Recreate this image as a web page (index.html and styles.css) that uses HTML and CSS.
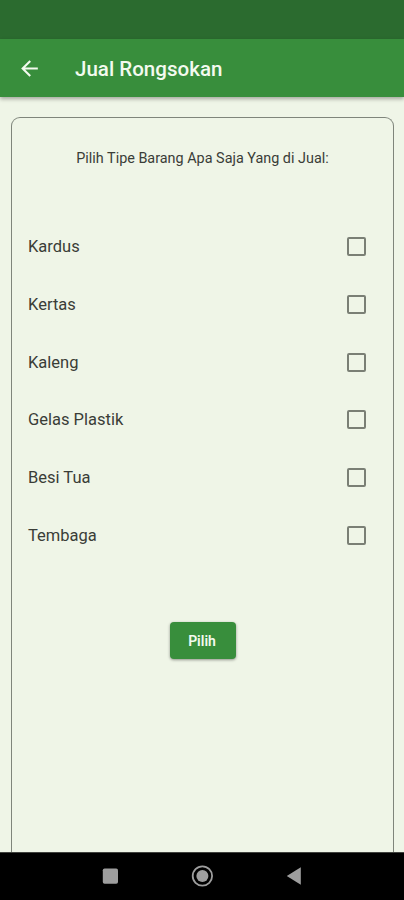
FILE: index.html
```html
<!DOCTYPE html>
<html lang="id">
<head>
<meta charset="utf-8">
<title>Jual Rongsokan</title>
<link rel="stylesheet" href="styles.css">
</head>
<body>
<div class="screen">
  <div class="statusbar"></div>
  <header class="appbar">
    <svg class="back" viewBox="0 0 24 24"><path d="M20 11H7.83l5.59-5.59L12 4l-8 8 8 8 1.41-1.41L7.83 13H20v-2z"/></svg>
    <h1 class="title">Jual Rongsokan</h1>
  </header>
  <main class="content">
    <section class="card">
      <p class="prompt"><span>Pilih Tipe Barang Apa Saja Yang di Jual:</span></p>
      <ul class="list">
        <li class="item"><span>Kardus</span><i class="box"></i></li>
        <li class="item"><span>Kertas</span><i class="box"></i></li>
        <li class="item"><span>Kaleng</span><i class="box"></i></li>
        <li class="item"><span>Gelas Plastik</span><i class="box"></i></li>
        <li class="item"><span>Besi Tua</span><i class="box"></i></li>
        <li class="item"><span>Tembaga</span><i class="box"></i></li>
      </ul>
      <button class="submit">Pilih</button>
    </section>
  </main>
  <nav class="navbar">
    <svg viewBox="0 0 24 24"><rect x="4.8" y="4.5" width="15.2" height="15.2" rx="1.8"/></svg>
    <svg viewBox="0 0 24 24"><circle class="ring" cx="12.4" cy="12" r="9.7"/><circle cx="12.4" cy="12" r="6"/></svg>
    <svg viewBox="0 0 24 24"><path d="M4.8 12 18.8 3.2v17.6z"/></svg>
  </nav>
</div>
</body>
</html>
```
FILE: styles.css
```css
* { box-sizing: border-box; }
body { margin: 0; font-family: Roboto, sans-serif; color: #3a3d37; }
.screen { width: 404px; height: 900px; display: flex; flex-direction: column; background: #eff5e7; overflow: hidden; }
.statusbar { height: 39px; background: #2b6b2f; flex: none; }
.appbar { height: 58px; flex: none; display: flex; align-items: center; padding: 0 17px; background: #388e3c; box-shadow: 0 2px 4px rgba(0,0,0,.32); color: #f3faef; z-index: 1; }
.back { width: 25px; height: 25px; fill: currentColor; flex: none; }
.title { margin: 2px 0 0 33px; font-size: 20.55px; line-height: 26px; font-weight: 500; white-space: nowrap; }
.content { flex: 1; min-height: 0; padding: 20px 10px 0 11px; display: flex; }
.card { flex: 1; border: 1px solid #7f857b; border-bottom: 0; border-radius: 9px 9px 0 0; display: flex; flex-direction: column; align-items: center; padding: 32px 16px 0; }
.prompt { margin: 0; font-size: 14.4px; line-height: 18px; white-space: nowrap; }
.list { list-style: none; margin: 50px 0 0; padding: 0; width: 100%; }
.item { height: 57.7px; display: flex; align-items: center; justify-content: space-between; padding-right: 11px; font-size: 16.5px; }
.box { width: 19px; height: 19px; border: 2px solid #7a7f75; border-radius: 2px; }
.submit { margin: 58px 0 0; width: 66px; height: 37px; border: 0; padding: 0 1px 0 0; border-radius: 4px; background: #388e3c; color: #f3faef; font: 600 14px Roboto, sans-serif; box-shadow: 0 1px 3px rgba(0,0,0,.4); }
.navbar { height: 48px; flex: none; background: #000; display: flex; align-items: center; justify-content: center; gap: 68px; border-top: 1px solid #40423e; padding-bottom: 1px; }
.navbar svg { width: 24px; height: 24px; fill: #9e9e9e; }
.navbar .ring { fill: none; stroke: #9e9e9e; stroke-width: 1.8; }
```
